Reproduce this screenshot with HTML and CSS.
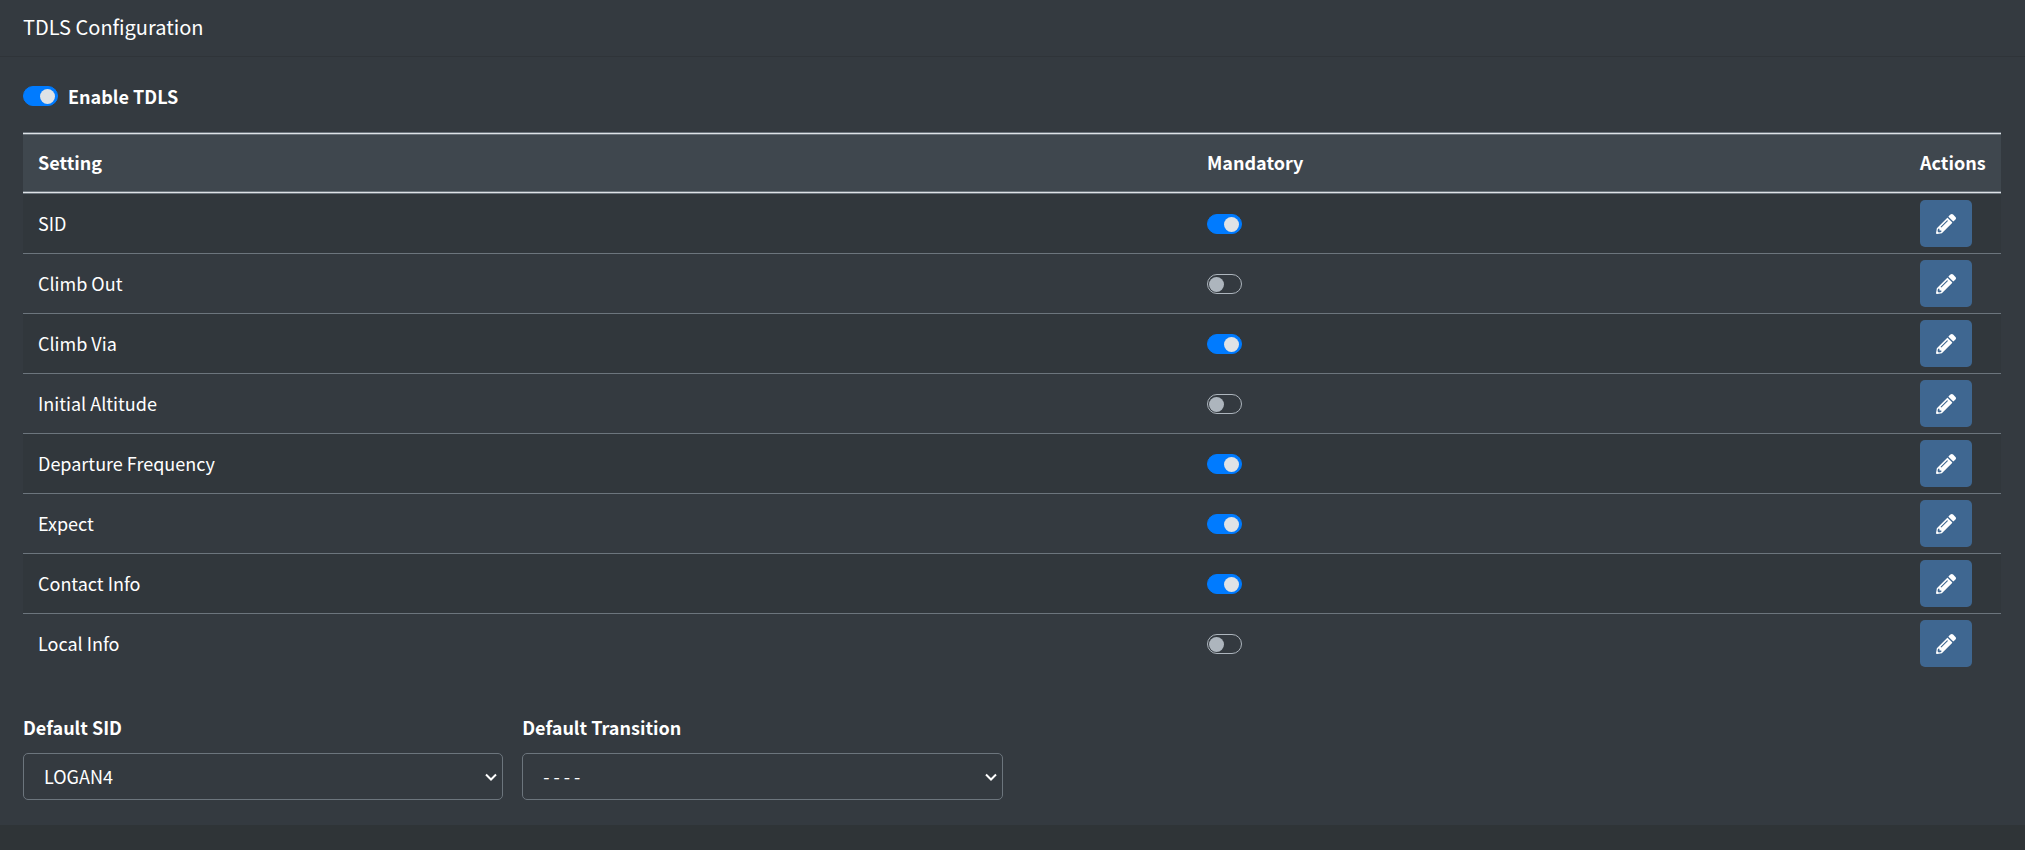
FILE: index.html
```
<!DOCTYPE html>
<html lang="en">
<head>
    <meta charset="UTF-8">
    <meta name="viewport" content="width=device-width, initial-scale=1.0">
    <title>TDLS Configuration</title>
    <link rel="stylesheet" href="styles.css">
</head>
<body>
<svg class="sprite" aria-hidden="true">
    <symbol id="pencil" viewBox="0 0 512 512">
        <path d="M497.9 142.1l-46.1 46.1c-4.7 4.7-12.3 4.7-17 0l-111-111c-4.7-4.7-4.7-12.3 0-17l46.1-46.1c18.7-18.7 49.1-18.7 67.9 0l60.1 60.1c18.8 18.7 18.8 49.1 0 67.9zM284.2 99.8L21.6 362.4.4 483.9c-2.9 16.4 11.4 30.6 27.8 27.8l121.5-21.3 262.6-262.6c4.7-4.7 4.7-12.3 0-17l-111-111c-4.8-4.7-12.4-4.7-17.1 0zM124.1 339.9c-5.5-5.5-5.5-14.3 0-19.8l154-154c5.5-5.5 14.3-5.5 19.8 0s5.5 14.3 0 19.8l-154 154c-5.5 5.5-14.3 5.5-19.8 0zM88 424h48v36.3l-64.5 11.3-31.1-31.1L51.7 376H88v48z"/>
    </symbol>
</svg>
<div class="card">
    <div class="card-header">
        <h3 class="card-title">TDLS Configuration</h3>
    </div>
    <div class="card-body">
        <div class="enable">
            <input type="checkbox" class="switch" id="enable-tdls" checked>
            <label for="enable-tdls">Enable TDLS</label>
        </div>
        <table class="settings">
            <thead>
            <tr>
                <th class="col-setting">Setting</th>
                <th class="col-mandatory">Mandatory</th>
                <th>Actions</th>
            </tr>
            </thead>
            <tbody>
            <tr>
                <td class="name">SID</td>
                <td><input type="checkbox" class="switch" aria-label="SID mandatory" checked></td>
                <td><button type="button" class="btn" aria-label="Edit SID"><svg><use href="#pencil"/></svg></button></td>
            </tr>
            <tr>
                <td class="name">Climb Out</td>
                <td><input type="checkbox" class="switch" aria-label="Climb Out mandatory"></td>
                <td><button type="button" class="btn" aria-label="Edit Climb Out"><svg><use href="#pencil"/></svg></button></td>
            </tr>
            <tr>
                <td class="name">Climb Via</td>
                <td><input type="checkbox" class="switch" aria-label="Climb Via mandatory" checked></td>
                <td><button type="button" class="btn" aria-label="Edit Climb Via"><svg><use href="#pencil"/></svg></button></td>
            </tr>
            <tr>
                <td class="name">Initial Altitude</td>
                <td><input type="checkbox" class="switch" aria-label="Initial Altitude mandatory"></td>
                <td><button type="button" class="btn" aria-label="Edit Initial Altitude"><svg><use href="#pencil"/></svg></button></td>
            </tr>
            <tr>
                <td class="name">Departure Frequency</td>
                <td><input type="checkbox" class="switch" aria-label="Departure Frequency mandatory" checked></td>
                <td><button type="button" class="btn" aria-label="Edit Departure Frequency"><svg><use href="#pencil"/></svg></button></td>
            </tr>
            <tr>
                <td class="name">Expect</td>
                <td><input type="checkbox" class="switch" aria-label="Expect mandatory" checked></td>
                <td><button type="button" class="btn" aria-label="Edit Expect"><svg><use href="#pencil"/></svg></button></td>
            </tr>
            <tr>
                <td class="name">Contact Info</td>
                <td><input type="checkbox" class="switch" aria-label="Contact Info mandatory" checked></td>
                <td><button type="button" class="btn" aria-label="Edit Contact Info"><svg><use href="#pencil"/></svg></button></td>
            </tr>
            <tr>
                <td class="name">Local Info</td>
                <td><input type="checkbox" class="switch" aria-label="Local Info mandatory"></td>
                <td><button type="button" class="btn" aria-label="Edit Local Info"><svg><use href="#pencil"/></svg></button></td>
            </tr>
            </tbody>
        </table>
        <div class="defaults">
            <div class="form-group">
                <label for="default-sid">Default SID</label>
                <select id="default-sid">
                    <option>LOGAN4</option>
                </select>
            </div>
            <div class="form-group">
                <label for="default-transition">Default Transition</label>
                <select id="default-transition">
                    <option>- - - -</option>
                </select>
            </div>
        </div>
    </div>
</div>
</body>
</html>
```
FILE: styles.css
```
* {
    box-sizing: border-box;
}
body {
    margin: 0;
    background-color: #2f3437;
    color: #fff;
    font-family: "Source Sans Pro", "Noto Sans CJK SC", sans-serif;
    font-size: 18px;
    line-height: 30px;
}
.sprite {
    display: none;
}
.card {
    background-color: #343a40;
}
.card-header {
    padding: 12px 23px 14px;
    border-bottom: 1px solid #2f3439;
}
.card-title {
    margin: 0;
    font-size: 20px;
    font-weight: 400;
}
.card-body {
    padding: 24px 24px 25px 23px;
}
.enable {
    display: flex;
    align-items: center;
    gap: 10px;
    margin-bottom: 21px;
}
label {
    font-weight: 700;
}
.switch {
    appearance: none;
    display: flex;
    width: 35px;
    height: 20px;
    margin: 0;
    padding: 2px 1px 0;
    border: 1px solid #adb5bd;
    border-radius: 10px;
    background-color: #343a40;
}
.switch::before {
    content: "";
    width: 15px;
    height: 15px;
    border-radius: 50%;
    background-color: #adb5bd;
}
.switch:checked {
    justify-content: flex-end;
    border-color: #007bff;
    background-color: #007bff;
    padding-right: 2px;
}
.switch:checked::before {
    background-color: #dee2e6;
}
.settings {
    width: 100%;
    border-collapse: separate;
    border-spacing: 0;
}
.settings th {
    height: 62px;
    padding: 0 15px 2px;
    text-align: left;
    background-color: #3f474e;
    border: solid #6c757d;
    border-width: 1px 0;
    box-shadow: inset 0 1px #dee2e6, inset 0 2px #6c757d, inset 0 -1px #dee2e6, inset 0 -2px #6c757d;
}
.col-setting {
    width: 59.1%;
}
.col-mandatory {
    width: 36.05%;
}
.settings td {
    height: 60px;
    padding: 0 15px;
    border-bottom: 1px solid #6c757d;
}
.settings td.name {
    padding-bottom: 2px;
}
.settings tr:last-child td {
    height: 59px;
    border-bottom: 0;
}
.settings tbody tr:nth-child(odd) {
    background-color: rgba(0, 0, 0, 0.05);
}
.btn {
    display: flex;
    align-items: center;
    justify-content: center;
    width: 52px;
    height: 47px;
    padding: 0;
    color: #fff;
    background-color: #3f6791;
    border: 0;
    border-radius: 5px;
}
.btn svg {
    width: 20px;
    height: 20px;
    fill: currentColor;
}
.defaults {
    display: grid;
    grid-template-columns: repeat(4, 1fr);
    gap: 19px;
    margin-top: 39px;
}
.form-group label {
    display: block;
    margin-bottom: 11px;
}
.form-group select {
    appearance: none;
    display: block;
    width: 100%;
    height: 47px;
    padding: 0 20px 2px;
    color: #fff;
    font: inherit;
    background: url("data:image/svg+xml,%3Csvg xmlns='http://www.w3.org/2000/svg' width='12' height='8' viewBox='0 0 12 8'%3E%3Cpath d='M1 1.5l5 5 5-5' fill='none' stroke='%23fff' stroke-width='2'/%3E%3C/svg%3E") no-repeat right 5px center #343a40;
    border: 1px solid #6c757d;
    border-radius: 5px;
}
```
